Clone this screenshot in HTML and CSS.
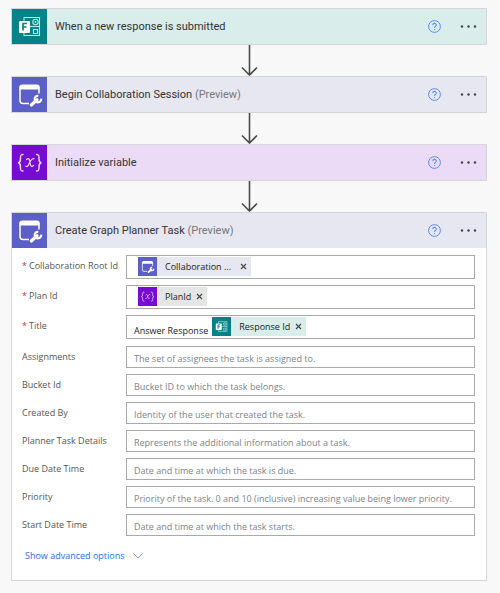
FILE: index.html
```html
<!DOCTYPE html>
<html lang="en">
<head>
<meta charset="utf-8">
<meta name="viewport" content="width=device-width, initial-scale=1">
<title>Flow designer</title>
<link rel="stylesheet" href="styles.css">
</head>
<body>
<svg class="defs" aria-hidden="true">
  <symbol id="forms" viewBox="0 0 35 35">
    <g fill="none" stroke="#c4e4e4">
      <path d="M12 12V8.500H27.500V26.500H12V23" stroke-width="1.100"/>
      <path d="M18 17.500H27.500" stroke-width="1.100"/>
      <circle cx="23.500" cy="13" r="2.700" stroke-width="1.100"/>
      <path d="M21.500 20.500h4v4h-4z" stroke-width="1.100"/>
    </g>
    <circle cx="23.500" cy="13" r="1" fill="#c4e4e4"/>
    <rect x="7" y="12" width="11" height="12" rx="1" fill="#fff"/>
    <path d="M11 21.500V14.500h4M11 18h3.500" fill="none" stroke="#038387" stroke-width="1.700"/>
  </symbol>
  <symbol id="planner" viewBox="0 0 35 35">
    <path d="M8 12V23.500Q8 26.500 11 26.500H17M27 12V16.500" fill="none" stroke="#fff" stroke-width="1.500"/>
    <path d="M7.200 12.500V10.500Q7.200 7.500 10.200 7.500H24.800Q27.800 7.500 27.800 10.500V12.500Z" fill="#fff"/>
    <path d="M19.300 28L25 22.800" stroke="#fff" stroke-width="3.200" stroke-linecap="round"/>
    <path d="M26.300 18.800A3.300 3.300 0 1 0 29.200 21.700" fill="none" stroke="#fff" stroke-width="2.200"/>
  </symbol>
  <symbol id="variable" viewBox="0 0 35 35">
    <g fill="none" stroke="#efdcfb" stroke-width="1.400" stroke-linecap="round">
      <path d="M11 9.500C8.500 9.500 8.500 10.500 8.500 12.500C8.500 15.500 8.500 17.500 6 17.700C8.500 18 8.500 20 8.500 23C8.500 25 8.500 26 11 26"/>
      <path d="M24.500 9.500C27 9.500 27 10.500 27 12.500C27 15.500 27 17.500 29.500 17.700C27 18 27 20 27 23C27 25 27 26 24.500 26"/>
      <path d="M14.500 14.500C17 12.500 17.500 14.500 18 17.500C18.500 20.500 19 22.500 21.500 20.500M22 13.700C19.500 13 17.500 17.500 16.500 20C15.500 21.700 14.700 21.800 13.800 21.200" stroke-width="1.200"/>
    </g>
  </symbol>
  <symbol id="help" viewBox="0 0 13 13">
    <circle cx="6.500" cy="6.500" r="5.900" fill="none" stroke="#5b8bf7"/>
    <path d="M4.800 5.200C4.800 2.800 8.300 2.900 8.300 5C8.300 6.400 6.500 6.300 6.500 7.900" fill="none" stroke="#5b8bf7" stroke-width="1.100"/>
    <circle cx="6.500" cy="9.600" r=".7" fill="#5b8bf7"/>
  </symbol>
  <symbol id="more" viewBox="0 0 17 5">
    <g fill="#444"><circle cx="2" cy="2.500" r="1.200"/><circle cx="8.500" cy="2.500" r="1.200"/><circle cx="15" cy="2.500" r="1.200"/></g>
  </symbol>
  <symbol id="arrow" viewBox="0 0 17 31">
    <path d="M8.500 0V30M1 22.500L8.500 30L16 22.500" fill="none" stroke="#4a4a4a" stroke-width="1.600"/>
  </symbol>
  <symbol id="close" viewBox="0 0 7 7">
    <path d="M1 1L6 6M6 1L1 6" stroke="#444" stroke-width="1.100"/>
  </symbol>
</svg>

<main class="flow">
  <section class="card">
    <header class="head teal">
      <svg class="logo"><use href="#forms"/></svg>
      <h2 class="title">When a new response is submitted</h2>
      <button class="icon-button" aria-label="Help"><svg class="help"><use href="#help"/></svg></button>
      <button class="icon-button" aria-label="More"><svg class="more"><use href="#more"/></svg></button>
    </header>
  </section>
  <svg class="arrow"><use href="#arrow"/></svg>
  <section class="card">
    <header class="head indigo">
      <svg class="logo"><use href="#planner"/></svg>
      <h2 class="title">Begin Collaboration Session <span class="preview">(Preview)</span></h2>
      <button class="icon-button" aria-label="Help"><svg class="help"><use href="#help"/></svg></button>
      <button class="icon-button" aria-label="More"><svg class="more"><use href="#more"/></svg></button>
    </header>
  </section>
  <svg class="arrow"><use href="#arrow"/></svg>
  <section class="card">
    <header class="head violet">
      <svg class="logo"><use href="#variable"/></svg>
      <h2 class="title">Initialize variable</h2>
      <button class="icon-button" aria-label="Help"><svg class="help"><use href="#help"/></svg></button>
      <button class="icon-button" aria-label="More"><svg class="more"><use href="#more"/></svg></button>
    </header>
  </section>
  <svg class="arrow"><use href="#arrow"/></svg>
  <section class="card">
    <header class="head indigo">
      <svg class="logo"><use href="#planner"/></svg>
      <h2 class="title">Create Graph Planner Task <span class="preview">(Preview)</span></h2>
      <button class="icon-button" aria-label="Help"><svg class="help"><use href="#help"/></svg></button>
      <button class="icon-button" aria-label="More"><svg class="more"><use href="#more"/></svg></button>
    </header>
    <form class="body">
      <div class="fields">
        <div class="field">
          <span class="label" id="root-label"><span class="star">*</span>Collaboration Root Id</span>
          <div class="box tokens" role="textbox" tabindex="0" aria-labelledby="root-label">
            <span class="token indigo"><svg class="logo"><use href="#planner"/></svg><span class="token-name">Collaboration ...</span><button type="button" class="remove wide" aria-label="Remove"><svg class="close"><use href="#close"/></svg></button></span>
          </div>
        </div>
        <div class="field">
          <span class="label" id="plan-label"><span class="star">*</span>Plan Id</span>
          <div class="box tokens" role="textbox" tabindex="0" aria-labelledby="plan-label">
            <span class="token violet muted"><svg class="logo"><use href="#variable"/></svg><span class="token-name">PlanId</span><button type="button" class="remove" aria-label="Remove"><svg class="close"><use href="#close"/></svg></button></span>
          </div>
        </div>
        <div class="field">
          <span class="label" id="title-label"><span class="star">*</span>Title</span>
          <div class="box tokens" role="textbox" tabindex="0" aria-labelledby="title-label">
            <span class="typed">Answer Response</span>
            <span class="token teal"><svg class="logo"><use href="#forms"/></svg><span class="token-name">Response Id</span><button type="button" class="remove" aria-label="Remove"><svg class="close"><use href="#close"/></svg></button></span>
          </div>
        </div>
      </div>
      <div class="fields">
        <div class="field"><label class="label" for="assignments">Assignments</label><input class="box" id="assignments" placeholder="The set of assignees the task is assigned to."></div>
        <div class="field"><label class="label" for="bucket">Bucket Id</label><input class="box" id="bucket" placeholder="Bucket ID to which the task belongs."></div>
        <div class="field"><label class="label" for="creator">Created By</label><input class="box" id="creator" placeholder="Identity of the user that created the task."></div>
        <div class="field"><label class="label" for="details">Planner Task Details</label><input class="box" id="details" placeholder="Represents the additional information about a task."></div>
        <div class="field"><label class="label" for="due">Due Date Time</label><input class="box" id="due" placeholder="Date and time at which the task is due."></div>
        <div class="field"><label class="label" for="priority">Priority</label><input class="box" id="priority" placeholder="Priority of the task. 0 and 10 (inclusive) increasing value being lower priority."></div>
        <div class="field"><label class="label" for="start">Start Date Time</label><input class="box" id="start" placeholder="Date and time at which the task starts."></div>
      </div>
      <button type="button" class="advanced">Show advanced options
        <svg class="chevron" viewBox="0 0 10 6"><path d="M.5 .5L5 5L9.500 .5" fill="none" stroke="#7da2f5"/></svg>
      </button>
    </form>
  </section>
</main>
</body>
</html>
```
FILE: styles.css
```css
* { box-sizing: border-box; }

body {
  margin: 0;
  background: #f8f8f8;
  color: #333;
  font-family: "Open Sans", "Noto Sans", sans-serif;
  font-size: 9px;
}

button {
  border: 0;
  padding: 0;
  background: none;
  font: inherit;
  color: inherit;
  cursor: pointer;
}

svg { display: block; flex: none; }

.defs { position: absolute; width: 0; height: 0; }

.flow {
  display: flex;
  flex-direction: column;
  padding: 8px 13px 12px 11px;
}

.card { border: 1px solid #d6d6d6; background: #fff; }

.head {
  display: flex;
  align-items: center;
  padding-right: 9px;
}

.teal { --brand: #038387; background: #d9edeb; }
.indigo { --brand: #5b5fc7; background: #e7e7f1; }
.violet { --brand: #770bd6; background: #ebdbf7; }
.muted { background: #e4e6e5; }

.logo { width: 35px; height: 35px; background: var(--brand); }

.title {
  flex: 1;
  margin: 0 0 0 8px;
  font-family: Roboto, "Open Sans", sans-serif;
  font-size: 11px;
  font-weight: 400;
  line-height: 16px;
}

.preview { color: #777; }

.icon-button { margin-left: 19px; }
.help { width: 13px; height: 13px; }
.more { width: 17px; height: 5px; }

.arrow { width: 17px; height: 31px; align-self: center; }

.body { padding: 7px 11px 17px 10px; }

.fields { display: grid; gap: 6px; margin-bottom: 7px; }

.field {
  display: grid;
  grid-template-columns: 104px minmax(0, 1fr);
}

.label { line-height: 21px; color: #555; white-space: nowrap; }
.star { margin-right: 2px; color: #d13438; }

.box {
  width: 100%;
  height: 22px;
  padding: 2px 7px 0;
  border: 1px solid #aaa;
  border-radius: 0;
  background: #fff;
  font: inherit;
}

.box::placeholder { color: #7d838a; opacity: 1; }

.tokens { display: flex; height: 24px; padding-top: 1px; }

.typed { line-height: 28px; color: #222; }

.token {
  display: flex;
  align-items: center;
  height: 19px;
  margin-left: 4px;
  padding-right: 4px;
}

.token .logo { width: 19px; height: 19px; }
.token-name { margin-left: 8px; color: #222; }
.remove { margin-left: 5px; }
.wide { margin-left: 9px; }
.close { width: 7px; height: 7px; }

.advanced {
  display: flex;
  align-items: center;
  gap: 8px;
  margin: 13px 0 0 3px;
  line-height: 14px;
  color: #2f6bf0;
}

.chevron { width: 10px; height: 6px; }
```
